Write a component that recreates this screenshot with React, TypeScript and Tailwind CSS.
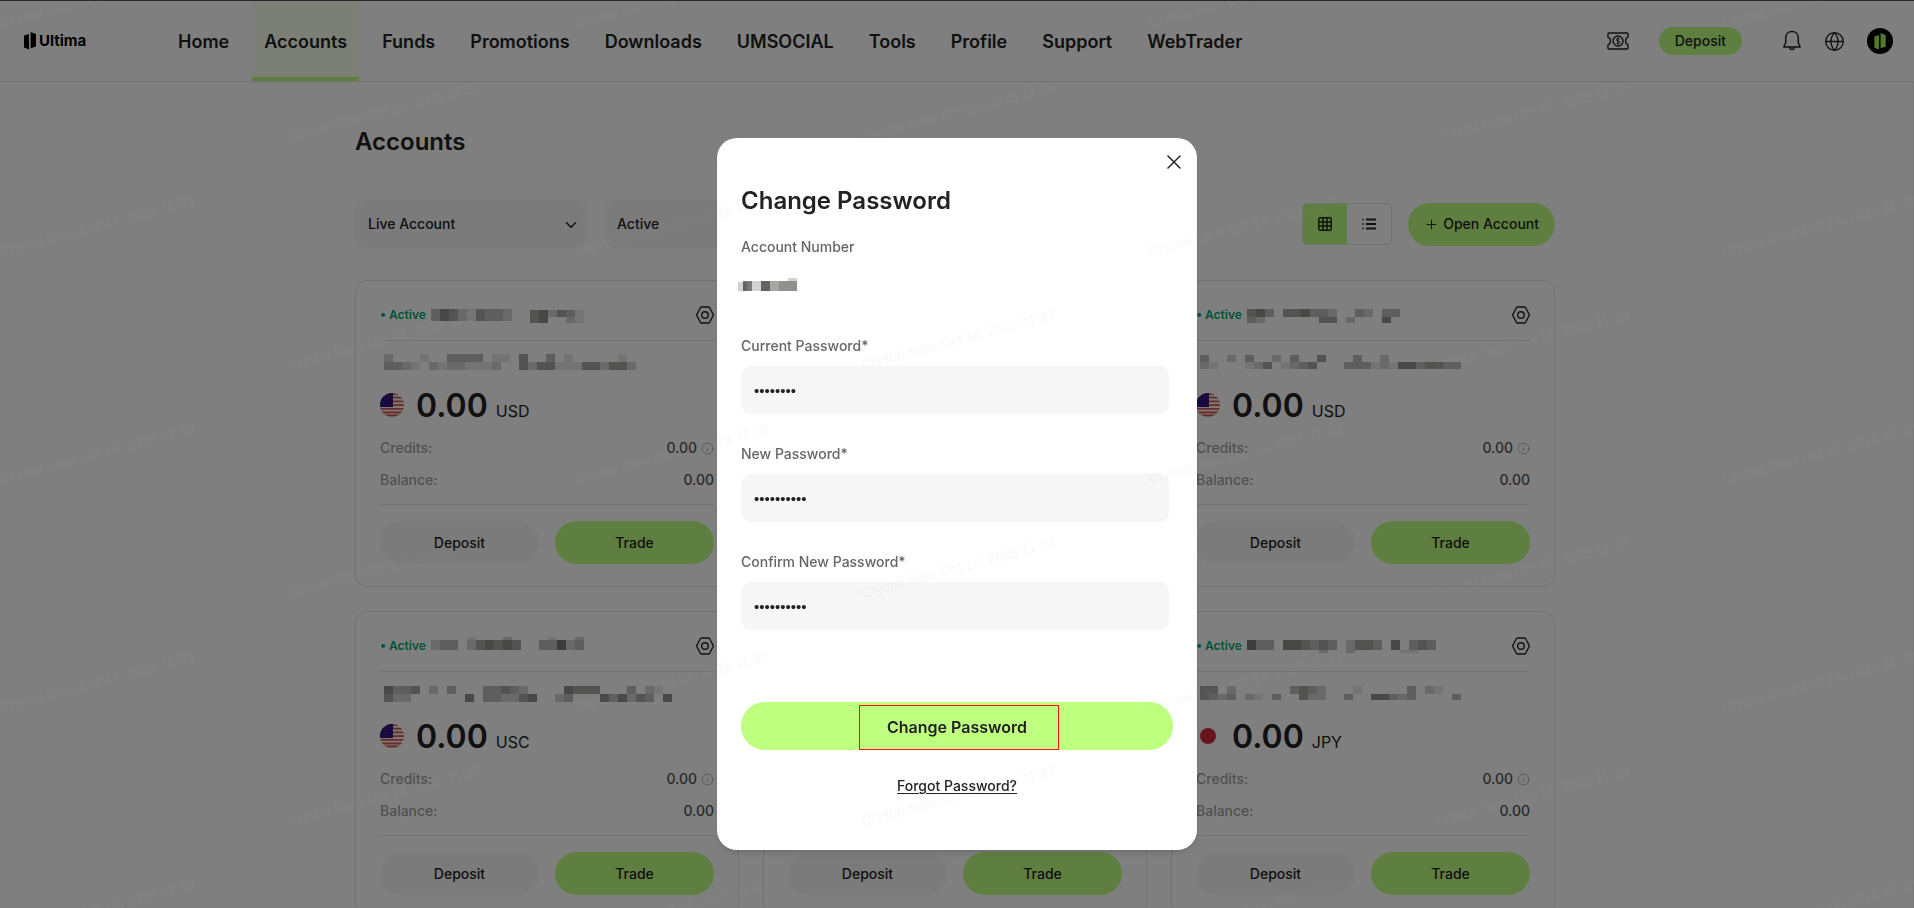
import React, { useState } from "react";
import { ChevronDown, Globe, Info, Plus, X } from "lucide-react";

type MosaicRow = { y: number; h: number; cells: string; x?: number };

type Account = {
  currency: string;
  flag: "us" | "jp";
  head: MosaicRow[];
  line: MosaicRow[];
};

const navItems = [
  "Home",
  "Accounts",
  "Funds",
  "Promotions",
  "Downloads",
  "UMSOCIAL",
  "Tools",
  "Profile",
  "Support",
  "WebTrader",
];

const accounts: Account[] = [
  {
    currency: "USD",
    flag: "us",
    head: [
      { y: 3, h: 12, cells: "354214332" },
      { y: 4, h: 7, x: 99, cells: "452431" },
      { y: 11, h: 6, x: 99, cells: "45  21" },
    ],
    line: [
      { y: 0, h: 8, cells: "2   1  3333 11 4  3 1     1" },
      { y: 8, h: 8, cells: "3321 21221112  4244111442442" },
    ],
  },
  {
    currency: "USD",
    flag: "us",
    head: [{ y: 4, h: 9, cells: "34 2453 442" }],
    line: [{ y: 4, h: 9, cells: "332 1244 3421 332" }],
  },
  {
    currency: "USD",
    flag: "us",
    head: [
      { y: 3, h: 8, cells: "453 445332  32 33" },
      { y: 11, h: 6, cells: "32      44 2   5" },
    ],
    line: [
      { y: 1, h: 7, cells: "3  2 3  2 3  4   3  2" },
      { y: 8, h: 7, cells: "21   124 1234   3331215534433" },
    ],
  },
  {
    currency: "USC",
    flag: "us",
    head: [
      { y: 0, h: 3, cells: "    1   2    1  2" },
      { y: 3, h: 10, cells: "233 245454  33623" },
    ],
    line: [
      { y: 1, h: 8, cells: "5334 2 3   33432    5444   3 21" },
      { y: 9, h: 8, cells: "422      5 332245  23   535243 5" },
    ],
  },
  {
    currency: "USD",
    flag: "us",
    head: [{ y: 4, h: 9, cells: "34 2453 442" }],
    line: [{ y: 4, h: 9, cells: "332 1244 3421 332" }],
  },
  {
    currency: "JPY",
    flag: "jp",
    head: [
      { y: 3, h: 10, cells: "633 554343 2443 5 343" },
      { y: 13, h: 3, cells: "        2  2     11" },
    ],
    line: [
      { y: 1, h: 8, cells: "44 2      3432   1     3 21" },
      { y: 9, h: 6, cells: "4323 21 3  422  3  55323    3" },
    ],
  },
];

// Hidden account details, each digit is the darkness of one 9px block
const Mosaic: React.FC<{ rows: MosaicRow[]; width: number }> = ({ rows, width }) => (
  <svg
    width={width}
    height="18"
    viewBox={`0 0 ${width} 18`}
    className="shrink-0 overflow-visible"
    aria-hidden="true"
  >
    {rows.map((row, r) =>
      row.cells.split("").map((c, i) =>
        c === " " ? null : (
          <rect
            key={`${r}-${i}`}
            x={(row.x ?? 0) + i * 9}
            y={row.y}
            width="9"
            height={row.h}
            fill="#0a0806"
            fillOpacity={Number(c) * 0.09}
          />
        )
      )
    )}
  </svg>
);

const LogoMark: React.FC<{ className?: string }> = ({ className }) => (
  <svg viewBox="0 0 12 18" fill="currentColor" className={className} aria-hidden="true">
    <path d="M0 3.6 5 2v15.6L0 15.6zM6.6 0 12 2v12.6l-5.4 1.6z" />
  </svg>
);

const VoucherIcon = () => (
  <svg width="22" height="18" viewBox="0 0 22 18" fill="none" stroke="currentColor" strokeWidth="1.4" aria-hidden="true">
    <path d="M2 1h18q1 0 1 1v3.2Q18.6 6 18.6 9T21 12.800V16q0 1-1 1H2q-1 0-1-1v-3.2Q3.4 12 3.4 9T1 5.2V2q0-1 1-1z" />
    <circle cx="11" cy="9" r="5" />
    <path d="M12.8 7.300Q12.4 6.500 11 6.500q-1.600 0-1.600 1.200T11 9q1.700.1 1.700 1.300T11 11.500q-1.500 0-1.900-.9M11 5.400v7.200" strokeWidth="1" />
  </svg>
);

const BellIcon = () => (
  <svg width="20" height="22" viewBox="0 0 20 22" fill="none" stroke="currentColor" strokeWidth="1.500" strokeLinejoin="round" strokeLinecap="round" aria-hidden="true">
    <path d="M10 1.500c-3.800 0-6.300 2.700-6.300 6.300v5L1.800 17h16.400l-1.900-4.200v-5c0-3.600-2.500-6.300-6.300-6.300z" />
    <path d="M7.800 17.300c0 3 4.400 3 4.400 0" />
  </svg>
);

const SettingsIcon = () => (
  <svg width="18" height="18" viewBox="0 0 18 18" fill="none" stroke="currentColor" strokeWidth="1.4" aria-hidden="true">
    <path d="M5.300 1h7.400q.5 0 .8.500L17.200 8.500q.2.500 0 1L13.500 16.500q-.3.500-.8.500H5.300q-.5 0-.8-.5L.8 9.500q-.2-.5 0-1L4.500 1.500Q4.800 1 5.300 1z" />
    <circle cx="9" cy="9" r="3.300" />
  </svg>
);

const GridIcon = () => (
  <svg width="14" height="14" viewBox="0 0 14 14" fill="none" stroke="currentColor" strokeWidth="1.500" aria-hidden="true">
    <rect x="0.800" y="0.800" width="12.400" height="12.400" rx="1.500" />
    <path d="M5 1v12M9 1v12M1 5h12M1 9h12" />
  </svg>
);

const ListIcon = () => (
  <svg width="14" height="12" viewBox="0 0 14 12" stroke="currentColor" strokeWidth="1.800" aria-hidden="true">
    <path d="M4 1.500h10M4 6h10M4 10.500h10" />
    <path d="M0 1.500h2M0 6h2M0 10.500h2" strokeOpacity="0.6" />
  </svg>
);

const Flag: React.FC<{ flag: "us" | "jp" }> = ({ flag }) => {
  if (flag === "jp") {
    return (
      <svg width="24" height="24" viewBox="0 0 24 24" role="img" aria-label="Japan">
        <circle cx="12" cy="12" r="11.500" fill="#fff" stroke="#f6f6f6" />
        <circle cx="12" cy="12" r="8" fill="#d02a3c" />
      </svg>
    );
  }
  return (
    <svg width="24" height="24" viewBox="0 0 24 24" role="img" aria-label="United States">
      <defs>
        <clipPath id="flag-round">
          <circle cx="12" cy="12" r="12" />
        </clipPath>
      </defs>
      <g clipPath="url(#flag-round)">
        <rect width="24" height="24" fill="#f8f4f2" />
        <path d="M0 1h24M0 4.700h24M0 8.400h24M0 12.100h24M0 15.800h24M0 19.500h24M0 22.500h24" stroke="#d4564c" strokeWidth="1.800" />
        <rect width="13" height="14" fill="#2c0c78" />
        <path
          d="M2 3h11M1 6h12M2 9h11M1 12h12"
          stroke="#8d82b8"
          strokeWidth="0.800"
          strokeDasharray="0.800 2"
        />
      </g>
    </svg>
  );
};

const Header = () => (
  <header className="flex h-[82px] items-center border-t border-b border-t-[#544c50] border-b-[#e2e2e2] pr-[21px] pl-6">
    <a href="#home" className="flex w-[142px] shrink-0 items-center gap-[3px] text-black">
      <LogoMark className="h-[18px] w-3" />
      <span className="text-[15px] font-bold">Ultima</span>
    </a>
    <nav className="flex h-full grow gap-[11px]">
      {navItems.map((item) => (
        <a
          key={item}
          href={`#${item.toLowerCase()}`}
          className={
            item === "Accounts"
              ? "flex items-center border-b-4 border-[#beff80] bg-[#f8ffec] px-3 pt-[6px] text-lg font-semibold"
              : "flex items-center px-3 pt-[2px] text-lg font-semibold"
          }
        >
          {item}
        </a>
      ))}
    </nav>
    <div className="flex shrink-0 items-center">
      <button aria-label="Vouchers" className="mr-[30px]">
        <VoucherIcon />
      </button>
      <button className="mr-10 h-7 rounded-full bg-[#beff80] px-4 text-sm font-medium">Deposit</button>
      <button aria-label="Notifications" className="mr-[22px]">
        <BellIcon />
      </button>
      <button aria-label="Language" className="mr-[22px]">
        <Globe size={21} strokeWidth={1.5} />
      </button>
      <button
        aria-label="My profile"
        className="flex size-[26px] items-center justify-center rounded-full bg-black text-[#a0f050]"
      >
        <LogoMark className="h-[17px] w-3" />
      </button>
    </div>
  </header>
);

const FilterSelect: React.FC<{ label: string; value: string }> = ({ label, value }) => (
  <div className="relative w-[233px]">
    <select
      aria-label={label}
      defaultValue={value}
      className="h-12 w-full appearance-none rounded-xl bg-[#f6f6f6] px-[13px] text-sm font-medium"
    >
      <option>{value}</option>
    </select>
    <ChevronDown size={18} className="pointer-events-none absolute top-4 right-2" />
  </div>
);

const AccountCard: React.FC<{ account: Account }> = ({ account }) => (
  <article className="rounded-xl border border-[#e2e2e2] px-6 pt-4 pb-[22px]">
    <div className="flex h-11 items-center border-b border-[#e2e2e2] pb-2">
      <span className="mr-[5px] text-xs font-semibold text-[#00a870]">•&nbsp;Active</span>
      <Mosaic rows={account.head} width={190} />
      <button aria-label="Account settings" className="ml-auto">
        <SettingsIcon />
      </button>
    </div>
    <div className="mt-[13px] pl-1">
      <Mosaic rows={account.line} width={290} />
    </div>
    <div className="mt-[13px] flex h-10 items-center">
      <Flag flag={account.flag} />
      <p className="ml-3 flex items-baseline gap-2 pt-[2px]">
        <span className="text-[32px] leading-10 font-semibold">0.00</span>
        <span className="text-base">{account.currency}</span>
      </p>
    </div>
    <dl className="mt-[7px] text-sm leading-8 font-medium">
      <div className="flex justify-between">
        <dt className="text-[#a2a2a2]">Credits:</dt>
        <dd className="flex items-center gap-1 text-[#555]">
          0.00
          <Info size={13} strokeWidth={1.5} className="text-[#a2a2a2]" />
        </dd>
      </div>
      <div className="flex justify-between">
        <dt className="text-[#a2a2a2]">Balance:</dt>
        <dd className="text-[#555]">0.00</dd>
      </div>
    </dl>
    <div className="mt-2 grid grid-cols-2 gap-4 border-t border-[#e2e2e2] pt-4">
      <button className="h-[43px] rounded-full bg-[#f6f6f6] text-sm font-medium">Deposit</button>
      <button className="h-[43px] rounded-full bg-[#beff80] text-sm font-medium">Trade</button>
    </div>
  </article>
);

const PasswordField: React.FC<{ id: string; label: string; initial: string }> = ({ id, label, initial }) => {
  const [value, setValue] = useState(initial);

  return (
    <div className="mb-[30px] w-[428px] max-w-full">
      <label htmlFor={id} className="mb-[10px] block text-sm font-medium text-[#666]">
        {label}
      </label>
      <input
        id={id}
        type="password"
        value={value}
        onChange={(e) => setValue(e.target.value)}
        className="block h-12 w-full rounded-[10px] bg-[#f6f6f6] px-[13px] font-['Liberation_Sans',sans-serif] text-[15px] outline-none"
      />
    </div>
  );
};

const ChangePasswordDialog = () => (
  <div className="fixed inset-0 flex items-start justify-center bg-black/50 pt-[138px]">
    <form
      role="dialog"
      aria-labelledby="dialog-title"
      onSubmit={(e) => e.preventDefault()}
      className="relative w-[480px] rounded-[20px] bg-white px-6 pt-[45px] pb-[54px] shadow-md"
    >
      <button type="button" aria-label="Close" className="absolute top-3 right-[11px]">
        <X size={24} strokeWidth={1.5} />
      </button>
      <h2 id="dialog-title" className="text-2xl leading-9 font-semibold">
        Change Password
      </h2>
      <p className="mt-[18px] text-sm font-medium text-[#666]">Account Number</p>
      <div className="mt-[21px] mb-10 h-[18px]">
        <Mosaic
          width={64}
          rows={[
            { y: 4, h: 9, x: -3, cells: "2" },
            { y: 3, h: 10, x: 2, cells: "627455" },
            { y: 0, h: 3, x: 47, cells: "2" },
          ]}
        />
      </div>
      <PasswordField id="current-password" label="Current Password*" initial="ultima01" />
      <PasswordField id="new-password" label="New Password*" initial="ultima2025" />
      <PasswordField id="confirm-password" label="Confirm New Password*" initial="ultima2025" />
      <button
        type="submit"
        className="mt-[72px] flex h-12 w-full items-end justify-center rounded-full bg-[#beff80] text-base font-semibold"
      >
        <span className="ml-1 flex h-[45px] w-[200px] items-center justify-center border border-[#ff1020] pr-1 pb-[2px]">
          Change Password
        </span>
      </button>
      <a href="#forgot" className="mx-auto mt-[26px] block w-fit text-sm font-medium underline underline-offset-2">
        Forgot Password?
      </a>
    </form>
  </div>
);

const Watermark = () => (
  <svg className="pointer-events-none fixed inset-0 h-full w-full" aria-hidden="true">
    <defs>
      <pattern id="watermark" x="-4" y="-56" width="574" height="228" patternUnits="userSpaceOnUse">
        <g fill="#9090a0" fillOpacity="0.08" fontSize="14" fontFamily="Liberation Sans, sans-serif">
          <text transform="translate(6 84) rotate(-15)">Crystal Siew Oct 14, 2025 11:33</text>
          <text transform="translate(293 198) rotate(-15)">Crystal Siew Oct 14, 2025 11:33</text>
        </g>
      </pattern>
    </defs>
    <rect width="100%" height="100%" fill="url(#watermark)" />
  </svg>
);

const App: React.FC = () => {
  return (
    <div className="h-screen overflow-hidden bg-white font-['Inter',sans-serif] text-[#222]">
      <Header />
      <main className="border-r border-[#ececec] pr-[3px]">
        <div className="mx-auto max-w-[1200px] pt-[42px]">
          <h1 className="text-2xl leading-9 font-semibold">Accounts</h1>
          <div className="mt-10 flex items-center gap-4">
            <FilterSelect label="Account type" value="Live Account" />
            <FilterSelect label="Account status" value="Active" />
            <div className="ml-auto flex h-[42px] w-[90px] overflow-hidden rounded border border-[#e2e2e2]">
              <button aria-label="Grid view" className="flex w-1/2 items-center justify-center bg-[#beff80]">
                <GridIcon />
              </button>
              <button aria-label="List view" className="flex w-1/2 items-center justify-center">
                <ListIcon />
              </button>
            </div>
            <button className="flex h-[43px] items-center gap-1 rounded-full bg-[#beff80] px-4 text-sm font-medium">
              <Plus size={15} strokeWidth={1.5} />
              Open Account
            </button>
          </div>
          <div className="mt-8 grid grid-cols-3 gap-6">
            {accounts.map((account, i) => (
              <AccountCard key={i} account={account} />
            ))}
          </div>
        </div>
      </main>
      <ChangePasswordDialog />
      <Watermark />
    </div>
  );
};

export default App;
